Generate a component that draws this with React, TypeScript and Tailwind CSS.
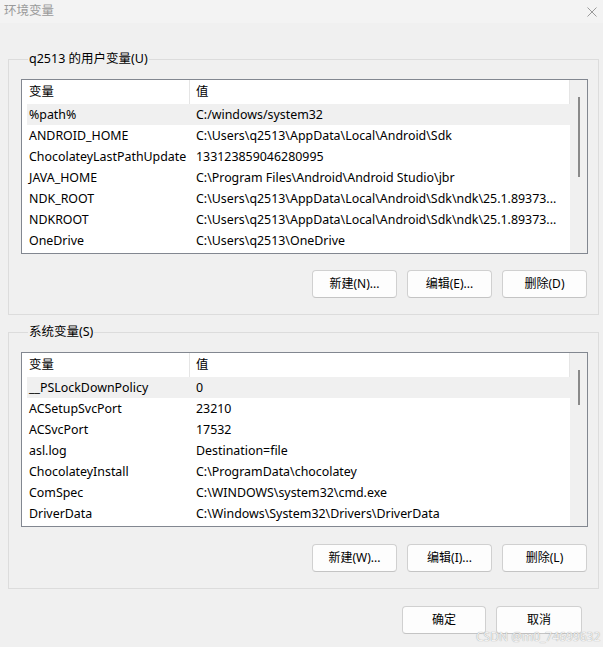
import React from "react";

type Row = { name: string; value: string };

const userVars: Row[] = [
  { name: "%path%", value: "C:/windows/system32" },
  { name: "ANDROID_HOME", value: "C:\\Users\\q2513\\AppData\\Local\\Android\\Sdk" },
  { name: "ChocolateyLastPathUpdate", value: "133123859046280995" },
  { name: "JAVA_HOME", value: "C:\\Program Files\\Android\\Android Studio\\jbr" },
  { name: "NDK_ROOT", value: "C:\\Users\\q2513\\AppData\\Local\\Android\\Sdk\\ndk\\25.1.89373..." },
  { name: "NDKROOT", value: "C:\\Users\\q2513\\AppData\\Local\\Android\\Sdk\\ndk\\25.1.89373..." },
  { name: "OneDrive", value: "C:\\Users\\q2513\\OneDrive" },
];

const sysVars: Row[] = [
  { name: "__PSLockDownPolicy", value: "0" },
  { name: "ACSetupSvcPort", value: "23210" },
  { name: "ACSvcPort", value: "17532" },
  { name: "asl.log", value: "Destination=file" },
  { name: "ChocolateyInstall", value: "C:\\ProgramData\\chocolatey" },
  { name: "ComSpec", value: "C:\\WINDOWS\\system32\\cmd.exe" },
  { name: "DriverData", value: "C:\\Windows\\System32\\Drivers\\DriverData" },
];

function Btn({ label, w = "w-[85px]" }: { label: string; w?: string }) {
  return (
    <button
      className={`${w} h-[28px] rounded-[4px] border border-[#d0d0d0] border-b-[#c4c4c4] bg-[#fdfdfd] text-[12px] text-black`}
    >
      {label}
    </button>
  );
}

function VarList({ rows, thumbTop, thumbH }: { rows: Row[]; thumbTop: string; thumbH: string }) {
  return (
    <div className="flex h-[175px] border border-[#828790] bg-white">
      <div className="flex flex-1 flex-col">
        <div className="flex h-[24px] items-center">
          <div className="w-[168px] border-r border-[#e5e5e5] h-full flex items-center pl-[7px]">变量</div>
          <div className="flex-1 border-r border-[#e5e5e5] h-full flex items-center pl-[6px]">值</div>
        </div>
        <div className="flex flex-col pl-[5px]">
          {rows.map((r, i) => (
            <div key={r.name} className={`flex h-[21px] items-center pt-[1px] ${i === 0 ? "bg-[#f0f0f0]" : ""}`}>
              <div className="w-[168px] pl-[2px] whitespace-nowrap overflow-hidden">{r.name}</div>
              <div className="flex-1 pl-[1px] whitespace-nowrap overflow-hidden">{r.value}</div>
            </div>
          ))}
        </div>
      </div>
      <div className="w-[17px] bg-[#f0f0f0] flex justify-center">
        <div className={`w-[2px] bg-[#8a8a8a] ${thumbTop} ${thumbH}`} />
      </div>
    </div>
  );
}

function Group({
  title,
  rows,
  buttons,
  thumbTop,
  thumbH,
  btnGap = "mt-[16px]",
  pb = "pb-[16px]",
}: {
  title: string;
  rows: Row[];
  buttons: string[];
  thumbTop: string;
  thumbH: string;
  btnGap?: string;
  pb?: string;
}) {
  return (
    <fieldset className={`border border-[#dcdcdc] pl-[12px] pr-[10px] ${pb}`}>
      <legend className="ml-[7px] px-[1px] h-[16px] leading-[16px] text-[12.5px]">{title}</legend>
      <div className="mt-[12px]">
        <VarList rows={rows} thumbTop={thumbTop} thumbH={thumbH} />
      </div>
      <div className={`${btnGap} flex justify-end gap-[10px] pr-[1px]`}>
        {buttons.map((b) => (
          <Btn key={b} label={b} />
        ))}
      </div>
    </fieldset>
  );
}

export default function App() {
  return (
    <div
      className="relative w-[603px] h-[647px] bg-[#f0f0f0] text-[12.4px] text-black flex flex-col overflow-hidden"
      style={{ fontFamily: '"Noto Sans", "Noto Sans CJK SC", sans-serif' }}
    >
      <div className="h-[23px] bg-[#f3f3f3] flex items-center justify-between pl-[4px] pr-[6px]">
        <span className="text-[12.5px] text-[#9a9a9a]">环境变量</span>
        <svg width="10" height="10" viewBox="0 0 10 10">
          <path d="M0.5 0.5 L9.5 9.5 M9.5 0.5 L0.5 9.5" stroke="#9a9a9a" strokeWidth="1" />
        </svg>
      </div>
      <div className="flex flex-col pl-[8px] pr-[4px] pt-[28px]">
        <Group
          title="q2513 的用户变量(U)"
          rows={userVars}
          buttons={["新建(N)...", "编辑(E)...", "删除(D)"]}
          thumbTop="mt-[17px]"
          thumbH="h-[80px]"
        />
        <div className="mt-[9px]">
          <Group
            title="系统变量(S)"
            rows={sysVars}
            buttons={["新建(W)...", "编辑(I)...", "删除(L)"]}
            thumbTop="mt-[17px]"
            thumbH="h-[35px]"
            btnGap="mt-[17px]"
            pb="pb-[16px]"
          />
        </div>
      </div>
      <div className="mt-[17px] flex justify-end gap-[10px] pr-[21px]">
        <Btn label="确定" w="w-[84px]" />
        <Btn label="取消" w="w-[86px]" />
      </div>
      <div className="absolute left-[476px] top-[628px] text-[12px] text-[#f2f2f2] [text-shadow:0_0_1px_#8a8a8a]">
        CSDN @m0_74699632
      </div>
    </div>
  );
}
